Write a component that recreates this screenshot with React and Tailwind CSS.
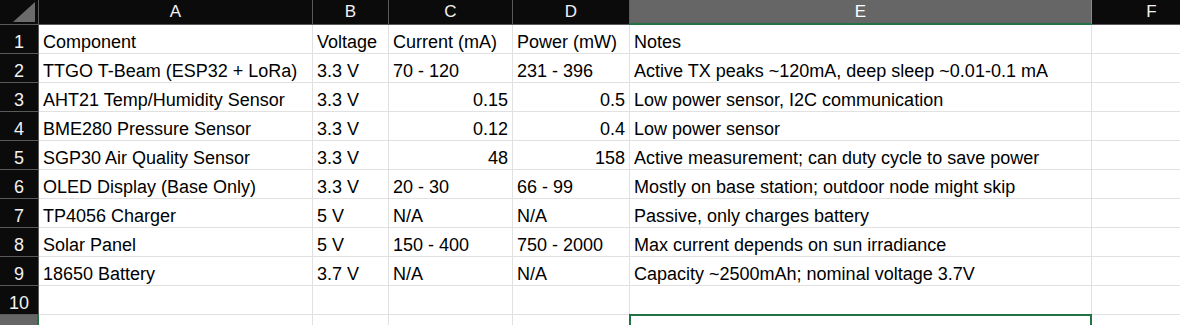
import React from 'react';

const cols = [
  { key: 'A', w: 'w-[274px]' },
  { key: 'B', w: 'w-[76px]' },
  { key: 'C', w: 'w-[124px]' },
  { key: 'D', w: 'w-[117px]' },
  { key: 'E', w: 'w-[462px]' },
  { key: 'F', w: 'w-[120px]' },
];

// r = right aligned numeric cell
const rows = [
  ['Component', 'Voltage', 'Current (mA)', 'Power (mW)', 'Notes'],
  ['TTGO T-Beam (ESP32 + LoRa)', '3.3 V', '70 - 120', '231 - 396', 'Active TX peaks ~120mA, deep sleep ~0.01-0.1 mA'],
  ['AHT21 Temp/Humidity Sensor', '3.3 V', { r: '0.15' }, { r: '0.5' }, 'Low power sensor, I2C communication'],
  ['BME280 Pressure Sensor', '3.3 V', { r: '0.12' }, { r: '0.4' }, 'Low power sensor'],
  ['SGP30 Air Quality Sensor', '3.3 V', { r: '48' }, { r: '158' }, 'Active measurement; can duty cycle to save power'],
  ['OLED Display (Base Only)', '3.3 V', '20 - 30', '66 - 99', 'Mostly on base station; outdoor node might skip'],
  ['TP4056 Charger', '5 V', 'N/A', 'N/A', 'Passive, only charges battery'],
  ['Solar Panel', '5 V', '150 - 400', '750 - 2000', 'Max current depends on sun irradiance'],
  ['18650 Battery', '3.7 V', 'N/A', 'N/A', 'Capacity ~2500mAh; nominal voltage 3.7V'],
  ['', '', '', '', ''],
];

const Cell = ({ value, w }) => {
  const right = value && typeof value === 'object';
  const text = right ? value.r : value;
  return (
    <div
      className={`${w} shrink-0 h-[29px] border-r border-b border-[#e1e1e1] flex items-end pb-[1px] px-[4px] whitespace-nowrap ${
        right ? 'justify-end' : 'justify-start'
      }`}
    >
      <span className="leading-[20px]">{text}</span>
    </div>
  );
};

const App = () => {
  return (
    <div
      className="w-[1180px] h-[325px] overflow-hidden bg-white text-black text-[18px]"
      style={{ fontFamily: '"Liberation Sans", Arial, sans-serif' }}
    >
      {/* column headers */}
      <div className="flex h-[25px]">
        <div className="w-[39px] shrink-0 bg-[#0b0b0b] border-r border-b border-[#5a5a5a] flex items-end justify-end pr-[3px] pb-[2px]">
          <svg width="22" height="20" viewBox="0 0 22 20">
            <polygon points="22,0 22,20 0,20" fill="#6b6b6b" />
          </svg>
        </div>
        {cols.map((c) =>
          c.key === 'E' ? (
            <div
              key={c.key}
              className={`${c.w} shrink-0 bg-[#666666] border-b-2 border-[#217346] border-r border-r-[#8a8a8a] flex items-center justify-center text-[17px] text-white`}
            >
              {c.key}
            </div>
          ) : (
            <div
              key={c.key}
              className={`${c.w} shrink-0 bg-[#0b0b0b] border-r border-b border-[#5a5a5a] flex items-center justify-center text-[17px] text-[#f2f2f2]`}
            >
              {c.key}
            </div>
          )
        )}
      </div>

      {/* data rows */}
      {rows.map((row, i) => (
        <div key={i} className="flex">
          <div className="w-[39px] shrink-0 h-[29px] bg-[#0b0b0b] border-r border-b border-[#5a5a5a] flex items-end justify-center pb-[1px] text-[#f2f2f2]">
            <span className="leading-[20px]">{i + 1}</span>
          </div>
          {row.map((v, j) => (
            <Cell key={j} value={v} w={cols[j].w} />
          ))}
          <Cell value="" w={cols[5].w} />
        </div>
      ))}

      {/* row 11, only its top shows */}
      <div className="flex">
        <div className="w-[39px] shrink-0 h-[29px] bg-[#666666] border-r-2 border-[#217346] flex items-end justify-center pb-[1px] text-white">
          <span className="leading-[20px]">11</span>
        </div>
        {cols.map((c) =>
          c.key === 'E' ? (
            <div key={c.key} className={`${c.w} shrink-0 h-[29px] relative border-r border-b border-[#e1e1e1]`}>
              <div className="absolute -left-[1px] -top-[1px] right-[-1px] bottom-0 border-2 border-[#217346]" />
            </div>
          ) : (
            <div key={c.key} className={`${c.w} shrink-0 h-[29px] border-r border-b border-[#e1e1e1]`} />
          )
        )}
      </div>
    </div>
  );
};

export default App;
